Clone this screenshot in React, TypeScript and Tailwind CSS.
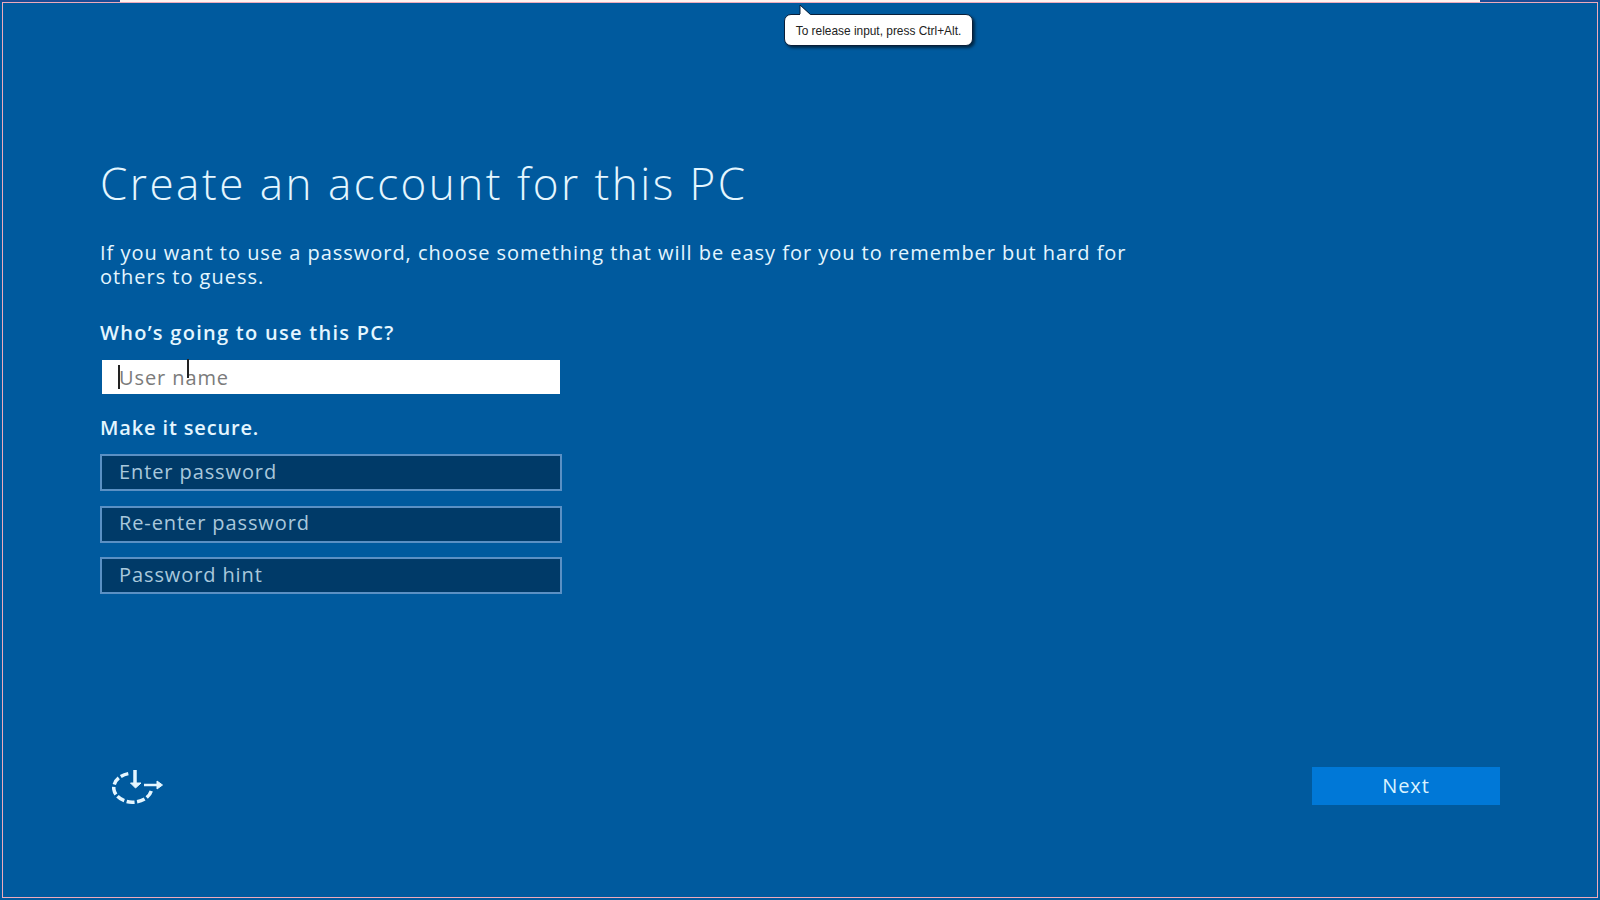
export default function App() {
  return (
    <div className="relative w-[1600px] h-[900px] overflow-hidden bg-[#005a9e] font-['Open_Sans',sans-serif]">
      {/* remote window chrome */}
      <div className="flex h-[2px] bg-[#1c4b94]">
        <div className="ml-[120px] w-[1360px] bg-[#fff4f0]" />
      </div>
      <div className="mx-[2px] h-[896px] border border-[#eeaabb] flex flex-col pl-[97px] pr-[97px]">
        <h1 className="mt-[150px] text-[44px] leading-[60px] font-light tracking-[2.5px] text-[#e4f6ff] whitespace-nowrap">
          Create an account for this PC
        </h1>
        <p className="mt-[28px] w-[1040px] text-[20px] leading-[24px] font-normal tracking-[0.97px] text-[#e4f6ff]">
          If you want to use a password, choose something that will be easy for you to remember but hard for others to guess.
        </p>
        <h2 className="mt-[31px] text-[20px] leading-[26px] font-semibold tracking-[1.28px] text-[#e4f6ff]">Who’s going to use this PC?</h2>
        <div className="mt-[14px] ml-[2px] w-[458px] h-[34px] bg-white flex items-center pl-[17px] pt-[1px] text-[20px] tracking-[0.9px] text-[#7b7b7b] relative">
          <span className="absolute left-[16px] top-[5px] w-[2px] h-[24px] bg-[#222222]" />
          User name
          <span className="absolute left-[85px] top-[-1px] w-[2px] h-[19px] bg-[#222222]" />
        </div>
        <h2 className="mt-[21px] text-[20px] leading-[26px] font-semibold tracking-[0.85px] text-[#e4f6ff]">Make it secure.</h2>
        <div className="mt-[13px] flex flex-col gap-[14.5px]">
          {["Enter password", "Re-enter password", "Password hint"].map((t) => (
            <div key={t} className="w-[462px] h-[37px] bg-[#003a68] border-2 border-[#5b90c4] flex items-center pl-[17px] pb-[2px] text-[20px] tracking-[0.9px] text-[#a9c8dc]">
              {t}
            </div>
          ))}
        </div>
        <div className="mt-auto mb-[91px] flex items-start justify-between">
          <svg className="ml-[10px] mt-[1px]" width="54" height="38" viewBox="0 0 54 38" fill="none" stroke="#e4f6ff" strokeWidth="3.5">
            <path d="M18.3 5.6 A19 14.5 0 1 0 41.5 22" strokeDasharray="8 2.5" />
            <path d="M25 2 V16" />
            <path d="M20.5 15 L25.5 20 L31 15 Z" fill="#e4f6ff" strokeWidth="1" />
            <path d="M34 17 H49" strokeWidth="2.5" />
            <path d="M47 13 L52.5 17 L47 21 Z" fill="#e4f6ff" strokeWidth="1" />
          </svg>
          <button className="w-[188px] h-[38px] bg-[#0078d7] text-[20px] font-medium tracking-[0.9px] text-[#d9f3ff]">
            Next
          </button>
        </div>
      </div>
      {/* tooltip */}
      <div className="absolute left-[784px] top-[14px] h-[32px] w-[189px] rounded-[7px] bg-white border border-[#0a1f3a] shadow-[2px_2px_3px_rgba(0,0,0,0.55)] flex items-center justify-center pt-[3px] text-[11.9px] text-[#222222] font-['Liberation_Sans',sans-serif]">
        To release input, press Ctrl+Alt.
      </div>
      <svg className="absolute left-[799px] top-[4px]" width="16" height="12" viewBox="0 0 16 12">
        <path d="M1 1 L1 11.5 L12 11.5 Z" fill="#ffffff" stroke="none" />
        <path d="M1 1 L1 10 M1 1 L11 10" stroke="#0a1f3a" strokeWidth="1" />
      </svg>
    </div>
  );
}
